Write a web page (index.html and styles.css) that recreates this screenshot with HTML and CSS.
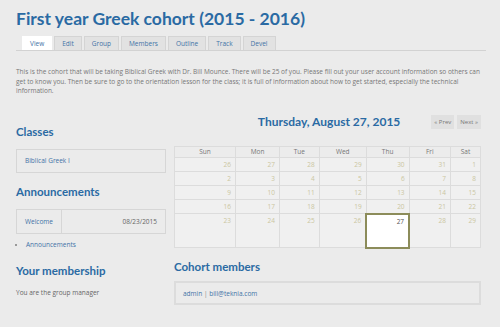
FILE: index.html
```html
<!DOCTYPE html>
<html lang="en">
<head>
    <meta charset="UTF-8">
    <title>First year Greek cohort (2015 - 2016)</title>
    <link rel="stylesheet" href="styles.css">
</head>
<body>
<div class="page">

    <h1 class="title">First year Greek cohort (2015 - 2016)</h1>

    <!-- Node tabs -->
    <ul class="tabs">
        <li class="tab active">View</li>
        <li class="tab">Edit</li>
        <li class="tab">Group</li>
        <li class="tab">Members</li>
        <li class="tab">Outline</li>
        <li class="tab">Track</li>
        <li class="tab">Devel</li>
    </ul>

    <p class="intro">This is the cohort that will be taking Biblical Greek with Dr. Bill Mounce. There will be 25 of you. Please fill out your user account information so others can get to know you. Then be sure to go to the orientation lesson for the class; it is full of information about how to get started, especially the technical information.</p>

    <div class="columns">
        <div class="sidebar">
            <h2 class="block-title first">Classes</h2>
            <div class="box"><a class="link">Biblical Greek I</a></div>

            <h2 class="block-title">Announcements</h2>
            <table class="announce">
                <tr>
                    <td class="announce-title"><a class="link">Welcome</a></td>
                    <td class="announce-date">08/23/2015</td>
                </tr>
            </table>
            <ul class="more">
                <li><a class="link">Announcements</a></li>
            </ul>

            <h2 class="block-title">Your membership</h2>
            <p class="note">You are the group manager</p>
        </div>

        <div class="main">
            <div class="cal-head">
                <h2 class="cal-date">Thursday, August 27, 2015</h2>
                <div class="pager">
                    <span class="pager-btn">« Prev</span>
                    <span class="pager-btn">Next »</span>
                </div>
            </div>

            <table class="calendar">
                <thead>
                    <tr>
                        <th class="c-sun">Sun</th><th class="c-mon">Mon</th><th>Tue</th><th>Wed</th><th>Thu</th><th>Fri</th><th class="c-sat">Sat</th>
                    </tr>
                </thead>
                <tbody>
                    <tr><td>26</td><td>27</td><td>28</td><td>29</td><td>30</td><td>31</td><td>1</td></tr>
                    <tr><td>2</td><td>3</td><td>4</td><td>5</td><td>6</td><td>7</td><td>8</td></tr>
                    <tr><td>9</td><td>10</td><td>11</td><td>12</td><td>13</td><td>14</td><td>15</td></tr>
                    <tr><td>16</td><td>17</td><td>18</td><td>19</td><td>20</td><td>21</td><td>22</td></tr>
                    <tr class="last"><td>23</td><td>24</td><td>25</td><td>26</td><td class="today">27</td><td>28</td><td>29</td></tr>
                </tbody>
            </table>

            <h2 class="block-title members-title">Cohort members</h2>
            <div class="box members"><a class="link">admin</a> <span class="sep">|</span> <a class="link">bill@teknia.com</a></div>
        </div>
    </div>

</div>
</body>
</html>
```

FILE: styles.css
```css
body {
    margin: 0;
    background-color: #ebebeb;
    font-family: "Open Sans", "Liberation Sans", sans-serif;
    color: #666;
}
.page {
    padding: 0 16px;
    width: 470px;
}
.title {
    margin: 0;
    padding-top: 5px;
    height: 30px;
    font-family: "Lato", sans-serif;
    font-weight: 700;
    font-size: 17.5px;
    color: #2a6aa3;
    line-height: 28px;
}
.tabs {
    list-style: none;
    margin: 1px 0 0 0;
    padding: 0 0 0 6px;
    display: flex;
    gap: 2px;
    height: 14px;
    border-bottom: 1px solid #d2d2d2;
}
.tab {
    box-sizing: border-box;
    height: 14px;
    padding: 0 7px;
    font-size: 6.5px;
    line-height: 13px;
    color: #3f72a6;
    background-color: #e2e2e2;
    border: 1px solid #d4d4d4;
    border-bottom: none;
}
.tab.active {
    background-color: #fff;
    border-color: #fff;
}
.intro {
    margin: 16px 0 0 0;
    font-size: 6.5px;
    line-height: 9.5px;
    color: #777;
}
.columns {
    display: grid;
    grid-template-columns: 150px 307px;
    column-gap: 8px;
}
.link {
    color: #3f72a6;
}
.block-title {
    margin: 0;
    font-family: "Lato", sans-serif;
    font-weight: 700;
    font-size: 11.5px;
    line-height: 14px;
    color: #2a6aa3;
}
.block-title.first {
    margin-top: 29px;
}
.box {
    box-sizing: border-box;
    margin-top: 10px;
    height: 24px;
    padding-left: 8px;
    border: 1px solid #d6d6d6;
    font-size: 6.5px;
    line-height: 22px;
}
.sidebar .box + .block-title {
    margin-top: 12px;
}
.announce {
    margin-top: 10px;
    width: 150px;
    height: 25px;
    border-collapse: collapse;
    font-size: 6.5px;
}
.announce td {
    border: 1px solid #d6d6d6;
    padding: 0 8px;
}
.announce-title {
    width: 26px;
}
.announce-date {
    text-align: right;
    color: #666;
}
.more {
    margin: 6px 0 0 0;
    padding: 0 0 0 10px;
    font-size: 6.5px;
    line-height: 9px;
}
.more li {
    list-style: square;
    color: #999;
}
.sidebar .more + .block-title {
    margin-top: 15px;
}
.note {
    margin: 10px 0 0 0;
    font-size: 6.5px;
}
.cal-head {
    margin-top: 19px;
    height: 14px;
    display: flex;
    align-items: center;
    justify-content: flex-end;
}
.cal-date {
    margin: 0 31px 0 0;
    font-family: "Lato", sans-serif;
    font-weight: 700;
    font-size: 12px;
    color: #2a6aa3;
}
.pager {
    display: flex;
    gap: 3px;
}
.pager-btn {
    height: 14px;
    padding: 0 3px;
    font-size: 6px;
    line-height: 14px;
    background-color: #e0e0e0;
    color: #777;
}
.calendar {
    margin-top: 17px;
    width: 307px;
    border-collapse: collapse;
    font-size: 6.5px;
}
.calendar th {
    height: 10px;
    padding: 0;
    font-weight: 400;
    line-height: 10px;
    color: #777;
    border: 1px solid #dcdcdc;
    background-color: #ececec;
}
.calendar td {
    height: 11px;
    padding: 2px 4px 0 0;
    text-align: right;
    vertical-align: top;
    line-height: 9px;
    color: #cbc6a0;
    border: 1px solid #dcdcdc;
    background-color: #f0f0f0;
}
.calendar .c-sun { width: 60px; }
.calendar .c-mon { width: 43px; }
.calendar .c-sat { width: 29px; }
.calendar .last td {
    height: 30px;
}
.calendar td.today {
    background-color: #fff;
    color: #555;
    border: 2px solid #8c8c5a;
}
.members-title {
    margin-top: 11px;
}
.members {
    margin-top: 7px;
    padding-left: 7px;
    border: 2px solid #dcdcdc;
}
.sep {
    color: #888;
}
```
